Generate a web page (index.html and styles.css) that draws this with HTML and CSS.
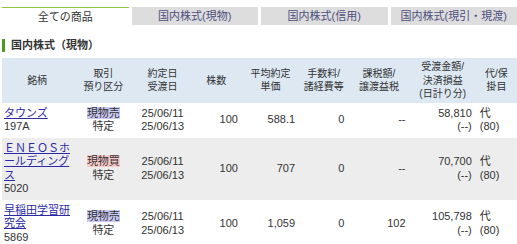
FILE: index.html
```html
<!DOCTYPE html>
<html lang="ja">
<head>
    <meta charset="UTF-8">
    <title>保有証券</title>
    <link rel="stylesheet" href="styles.css">
</head>
<body>
    <div class="tabs">
        <div class="tab active">全ての商品</div>
        <div class="tab">国内株式(現物)</div>
        <div class="tab">国内株式(信用)</div>
        <div class="tab">国内株式(現引・現渡)</div>
    </div>

    <h2 class="section">国内株式（現物）</h2>

    <table class="positions">
        <colgroup>
            <col style="width:70px">
            <col style="width:62px">
            <col style="width:56px">
            <col style="width:51px">
            <col style="width:57px">
            <col style="width:49px">
            <col style="width:61px">
            <col style="width:66px">
            <col style="width:41px">
        </colgroup>
        <thead>
            <tr>
                <th>銘柄</th>
                <th>取引<br>預り区分</th>
                <th>約定日<br>受渡日</th>
                <th>株数</th>
                <th>平均約定<br>単価</th>
                <th>手数料/<br>諸経費等</th>
                <th>課税額/<br>譲渡益税</th>
                <th>受渡金額/<br>決済損益<br>(日計り分)</th>
                <th>代/保<br>掛目</th>
            </tr>
        </thead>
        <tbody>
            <tr>
                <td class="name"><a href="#">タウンズ</a><br>197A</td>
                <td class="center"><span class="sell">現物売</span><br>特定</td>
                <td class="center">25/06/11<br>25/06/13</td>
                <td class="num">100</td>
                <td class="num">588.1</td>
                <td class="num">0</td>
                <td class="num">--</td>
                <td class="num">58,810<br>(--)</td>
                <td class="rate">代<br>(80)</td>
            </tr>
            <tr class="alt">
                <td class="name"><a href="#">ＥＮＥＯＳホールディングス</a><br>5020</td>
                <td class="center"><span class="buy">現物買</span><br>特定</td>
                <td class="center">25/06/11<br>25/06/13</td>
                <td class="num">100</td>
                <td class="num">707</td>
                <td class="num">0</td>
                <td class="num">--</td>
                <td class="num">70,700<br>(--)</td>
                <td class="rate">代<br>(80)</td>
            </tr>
            <tr>
                <td class="name"><a href="#">早稲田学習研究会</a><br>5869</td>
                <td class="center"><span class="sell">現物売</span><br>特定</td>
                <td class="center">25/06/11<br>25/06/13</td>
                <td class="num">100</td>
                <td class="num">1,059</td>
                <td class="num">0</td>
                <td class="num">102</td>
                <td class="num">105,798<br>(--)</td>
                <td class="rate">代<br>(80)</td>
            </tr>
        </tbody>
    </table>
</body>
</html>
```

FILE: styles.css
```css
body {
    margin: 0;
    padding: 0 0 0 2px;
    font-family: "Liberation Sans", "Noto Sans CJK JP", sans-serif;
    font-size: 11px;
    color: #333;
    background-color: #fff;
}
.tabs {
    display: flex;
    gap: 3px;
    margin-top: 7px;
    width: 515px;
}
.tab {
    flex: 1;
    height: 18px;
    line-height: 18px;
    text-align: center;
    background-color: #dddddd;
    color: #4f4f80;
}
.tab.active {
    background-color: #fff;
    color: #333;
    border-top: 1px solid #8cc83c;
    height: 17px;
}
.section {
    margin: 14px 0 6px 0;
    padding-left: 6px;
    border-left: 3px solid #4d9a1e;
    font-size: 11px;
    font-weight: bold;
    line-height: 13px;
    color: #333;
}
.positions {
    border-collapse: collapse;
    table-layout: fixed;
    width: 515px;
}
.positions th {
    background-color: #dde8f3;
    font-size: 10px;
    font-weight: normal;
    line-height: 13.5px;
    padding: 2px 0;
    text-align: center;
}
.positions td {
    padding: 4px 4px;
    line-height: 13.5px;
    vertical-align: middle;
}
.positions tr.alt td {
    background-color: #ededed;
}
.positions td.name {
    padding-left: 2px;
    padding-right: 0;
}
.name a {
    color: #2a2aa8;
}
.center {
    text-align: center;
}
.num {
    text-align: right;
}
.rate {
    text-align: left;
}
.sell {
    background-color: #c9c9f5;
}
.buy {
    background-color: #f7c9c9;
}
```
